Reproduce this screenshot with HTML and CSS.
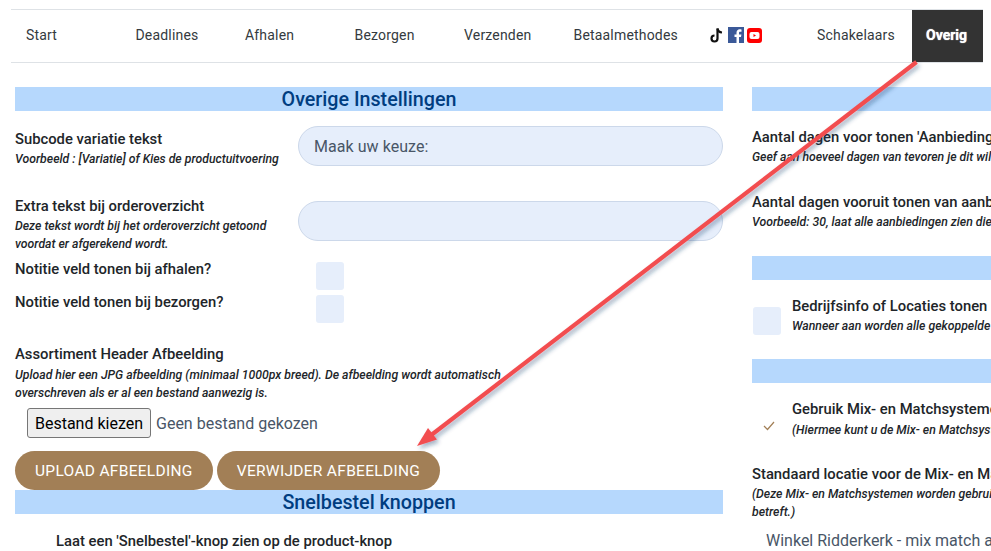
FILE: index.html
```html
<!DOCTYPE html>
<html lang="nl">
<head>
    <meta charset="UTF-8">
    <title>Overige Instellingen</title>
    <link rel="stylesheet" href="styles.css">
</head>
<body>
    <nav class="tabs">
        <a class="tab" href="#">Start</a>
        <a class="tab" href="#">Deadlines</a>
        <a class="tab" href="#">Afhalen</a>
        <a class="tab" href="#">Bezorgen</a>
        <a class="tab" href="#">Verzenden</a>
        <a class="tab tab-wide" href="#">Betaalmethodes</a>
        <a class="tab-social" href="#">
            <svg width="16" height="17" viewBox="0 0 16 17">
                <path d="M8.500 1.500v10a3 3 0 1 1-3-3" fill="none" stroke="#111" stroke-width="2.200"/>
                <path d="M8.500 1.500c.3 2.400 1.900 3.800 4.500 4" fill="none" stroke="#111" stroke-width="2.200"/>
            </svg>
            <svg width="16" height="16" viewBox="0 0 16 16">
                <rect width="16" height="16" fill="#3b5998"/>
                <path d="M11 16v-6h2l.4-2.500H11V6c0-.8.3-1.300 1.300-1.300h1.200V2.500c-.5-.1-1.200-.2-1.900-.2C10 2.300 8.500 3.500 8.500 5.700v1.800h-2V10h2v6z" fill="#fff"/>
            </svg>
            <svg width="15" height="15" viewBox="0 0 15 15">
                <rect width="15" height="15" rx="3" fill="#f00"/>
                <rect x="2.500" y="4" width="10" height="7" rx="2" fill="#fff"/>
                <path d="M6.500 6v3l2.500-1.500z" fill="#f00"/>
            </svg>
        </a>
        <a class="tab tab-switches" href="#">Schakelaars</a>
        <a class="tab tab-active" href="#">Overig</a>
    </nav>

    <main class="columns">
        <section class="col">
            <h2 class="bar">Overige Instellingen</h2>

            <div class="field first-field">
                <div class="field-text">
                    <label>Subcode variatie tekst</label>
                    <p class="hint">Voorbeeld : [Variatie] of Kies de productuitvoering</p>
                </div>
                <input class="text-input" type="text" placeholder="Maak uw keuze:">
            </div>

            <div class="field second-field">
                <div class="field-text">
                    <label>Extra tekst bij orderoverzicht</label>
                    <p class="hint">Deze tekst wordt bij het orderoverzicht getoond<br>voordat er afgerekend wordt.</p>
                </div>
                <input class="text-input" type="text">
            </div>

            <div class="check-row">
                <label>Notitie veld tonen bij afhalen?</label>
                <span class="checkbox"></span>
            </div>
            <div class="check-row next">
                <label>Notitie veld tonen bij bezorgen?</label>
                <span class="checkbox"></span>
            </div>

            <div class="upload">
                <label>Assortiment Header Afbeelding</label>
                <p class="hint">Upload hier een JPG afbeelding (minimaal 1000px breed). De afbeelding wordt automatisch<br>overschreven als er al een bestand aanwezig is.</p>
                <div class="file-row">
                    <button class="file-btn" type="button">Bestand kiezen</button>
                    <span class="file-name">Geen bestand gekozen</span>
                </div>
                <div class="btn-row">
                    <button class="btn" type="button">UPLOAD AFBEELDING</button>
                    <button class="btn" type="button">VERWIJDER AFBEELDING</button>
                </div>
            </div>

            <h2 class="bar">Snelbestel knoppen</h2>
            <label class="quick-label">Laat een 'Snelbestel'-knop zien op de product-knop</label>
        </section>

        <section class="col">
            <h2 class="bar">&nbsp;</h2>

            <div class="stack first-stack">
                <label>Aantal dagen voor tonen 'Aanbiedingen'</label>
                <p class="hint">Geef aan hoeveel dagen van tevoren je dit wilt tonen</p>
            </div>
            <div class="stack second-stack">
                <label>Aantal dagen vooruit tonen van aanbiedingen</label>
                <p class="hint">Voorbeeld: 30, laat alle aanbiedingen zien die binnen 30 dagen starten</p>
            </div>

            <h2 class="bar bar-third">&nbsp;</h2>
            <div class="option option-info">
                <span class="checkbox"></span>
                <div>
                    <label>Bedrijfsinfo of Locaties tonen</label>
                    <p class="hint">Wanneer aan worden alle gekoppelde locaties getoond</p>
                </div>
            </div>

            <h2 class="bar bar-fourth">&nbsp;</h2>
            <div class="option option-mix">
                <span class="tick">
                    <svg width="12" height="10" viewBox="0 0 12 10">
                        <path d="M1 5l3.500 3.500L11 1" fill="none" stroke="#a27f56" stroke-width="1.200"/>
                    </svg>
                </span>
                <div>
                    <label>Gebruik Mix- en Matchsystemen</label>
                    <p class="hint">(Hiermee kunt u de Mix- en Matchsystemen inschakelen)</p>
                </div>
            </div>

            <div class="stack mix-stack">
                <label>Standaard locatie voor de Mix- en Matchsystemen</label>
                <p class="hint">(Deze Mix- en Matchsystemen worden gebruikt als het de standaard locatie<br>betreft.)</p>
            </div>
            <div class="select-text">Winkel Ridderkerk - mix match aanbieding</div>
        </section>
    </main>

    <!-- annotation arrow over the page -->
    <svg class="arrow" width="991" height="551" viewBox="0 0 991 551">
        <defs>
            <filter id="arrowShadow" x="-5%" y="-5%" width="110%" height="110%">
                <feDropShadow dx="2" dy="3" stdDeviation="2" flood-color="#1f3f6a" flood-opacity="0.4"/>
            </filter>
        </defs>
        <g filter="url(#arrowShadow)">
            <line x1="916.500" y1="62" x2="430" y2="436" stroke="#f24d50" stroke-width="4.200"/>
            <path d="M417 446l11-18 9 11.500z" fill="#f24d50"/>
        </g>
    </svg>
</body>
</html>
```

FILE: styles.css
```css
/* Basic Styling */
html, body {
    margin: 0;
    padding: 0;
    height: 551px;
    overflow: hidden;
    background-color: #ffffff;
}

body {
    font-family: Roboto, "Liberation Sans", sans-serif;
    color: #212529;
    position: relative;
}

/* Tabs */
.tabs {
    display: flex;
    margin: 9px 8px 0 11px;
    height: 52px;
    border-top: 1px solid #dee2e6;
    border-bottom: 1px solid #dee2e6;
}

.tab {
    box-sizing: border-box;
    width: 109.500px;
    padding-left: 15px;
    line-height: 51px;
    font-size: 14px;
    letter-spacing: 0.18px;
    color: #343a40;
    text-decoration: none;
}

.tab-wide {
    width: 150px;
}

.tab-social {
    display: flex;
    align-items: center;
    gap: 3px;
    width: 93.500px;
    height: 50px;
}

.tab-switches {
    width: 110px;
}

.tab-active {
    width: 71px;
    padding-left: 14px;
    background-color: #333333;
    color: #ffffff;
    font-weight: 700;
    letter-spacing: 0;
    text-shadow: 0 0 1px #ffffff;
}

/* Columns */
.columns {
    display: grid;
    grid-template-columns: 708px 708px;
    column-gap: 29px;
    margin: 24px 0 0 15px;
}

.col {
    min-width: 0;
}

.bar {
    margin: 0;
    height: 24px;
    line-height: 26px;
    font-size: 19.700px;
    font-weight: 500;
    text-align: center;
    color: #003d80;
    background-color: #b6d8fd;
}

label {
    display: block;
    font-size: 14.800px;
    font-weight: 500;
    line-height: 20px;
    color: #212529;
}

.hint {
    margin: 0;
    font-size: 12.250px;
    font-weight: 500;
    font-style: italic;
    line-height: 18px;
    color: #212529;
}

/* Left column */
.field {
    display: grid;
    grid-template-columns: 283px 425px;
}

.first-field {
    margin-top: 15px;
    height: 75px;
}

.first-field .field-text {
    padding-top: 3px;
}

.first-field .hint {
    margin-top: 1px;
}

.second-field {
    height: 61px;
}

.second-field .field-text {
    margin-top: -5px;
}

.second-field .hint {
    margin-top: 1px;
}

.text-input {
    box-sizing: border-box;
    width: 425px;
    height: 40px;
    padding: 0 15px;
    font-family: inherit;
    font-size: 16px;
    letter-spacing: 0.05px;
    background-color: #e6eefb;
    border: 1px solid #ccd8ea;
    border-radius: 20px;
}

.text-input::placeholder {
    color: #495667;
    opacity: 1;
}

.check-row {
    display: grid;
    grid-template-columns: 301px 28px;
    height: 28px;
}

.check-row label {
    margin-top: -3px;
}

.check-row.next {
    margin-top: 5px;
}

.checkbox {
    display: block;
    width: 28px;
    height: 28px;
    background-color: #e6eefb;
    border-radius: 3px;
}

.upload {
    margin-top: 21px;
}

.upload .hint {
    margin-top: 2px;
}

.file-row {
    display: flex;
    align-items: center;
    gap: 5px;
    margin: 6px 0 0 12px;
    height: 30px;
}

.file-btn {
    box-sizing: border-box;
    width: 124px;
    height: 30px;
    padding: 0;
    font-family: inherit;
    font-size: 16px;
    color: #000000;
    background-color: #efefef;
    border: 1px solid #767676;
    border-radius: 3px;
}

.file-name {
    font-size: 16px;
    color: #495667;
}

.btn-row {
    display: flex;
    gap: 4px;
    margin-top: 13px;
}

.btn {
    height: 39px;
    padding: 0 20px;
    font-family: inherit;
    font-size: 15.500px;
    letter-spacing: 0.3px;
    color: #ffffff;
    background-color: #a27f56;
    border: none;
    border-radius: 20px;
}

.quick-label {
    margin: 17px 0 0 41px;
}

/* Right column */
.stack label, .option label {
    white-space: nowrap;
}

.stack .hint, .option .hint {
    margin-top: 1px;
    white-space: nowrap;
}

.first-stack {
    margin-top: 16px;
}

.second-stack {
    margin-top: 26px;
}

.bar-third {
    margin-top: 25px;
}

.option {
    display: grid;
    grid-template-columns: 40px 1fr;
    align-items: start;
}

.option-info {
    margin-top: 16px;
}

.option-info .checkbox {
    margin: 11px 0 0 1px;
}

.bar-fourth {
    margin-top: 24px;
}

.option-mix {
    margin-top: 16px;
}

.option-mix .hint {
    margin-top: 2px;
}

.tick {
    display: block;
    padding: 17px 0 0 11px;
}

.mix-stack {
    margin-top: 25px;
}

.select-text {
    margin: 10px 0 0 14px;
    font-size: 16px;
    color: #495667;
    white-space: nowrap;
}

/* Annotation */
.arrow {
    position: absolute;
    left: 0;
    top: 0;
    pointer-events: none;
}
```
